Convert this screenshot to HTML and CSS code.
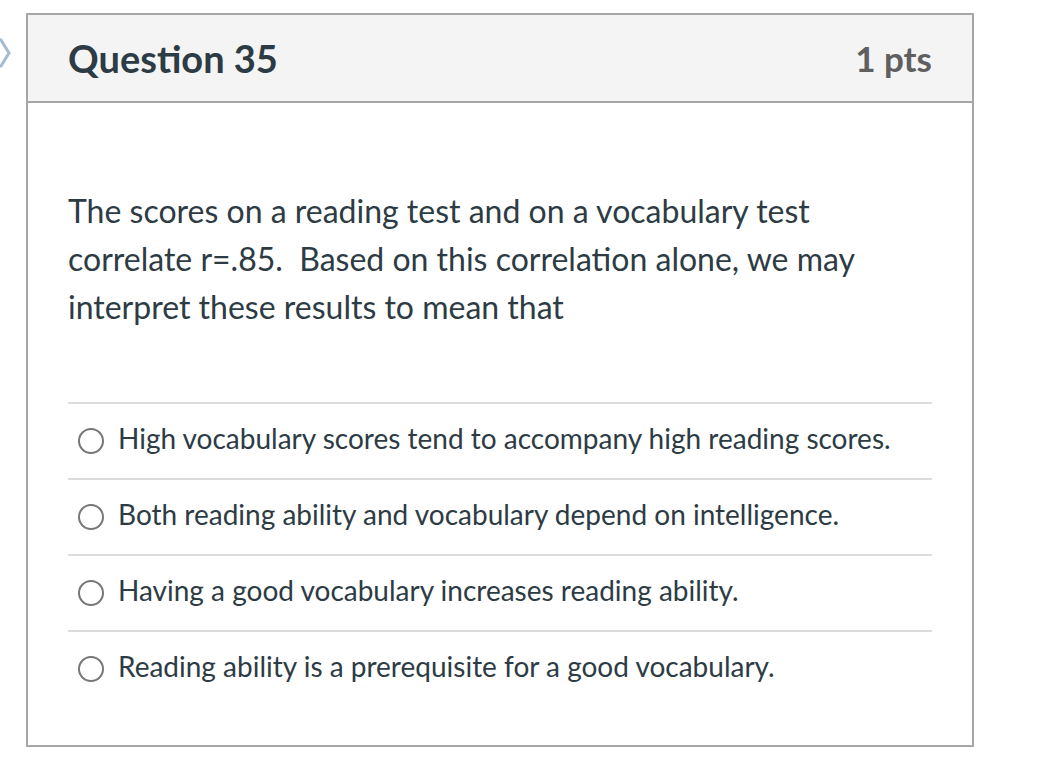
FILE: index.html
```html
<!DOCTYPE html>
<html>
<head>
<meta charset="utf-8">
<link rel="stylesheet" href="styles.css">
</head>
<body>
<svg class="flag" width="12" height="30" viewBox="0 0 12 30">
  <path d="M-6 2 L1 2 L9 15 L1 28 L-6 28" fill="none" stroke="#a3bcd2" stroke-width="3"/>
</svg>
<div class="card">
  <div class="header">
    <span class="title">Question 35</span>
    <span class="pts">1 pts</span>
  </div>
  <div class="content">
    <p class="question">The scores on a reading test and on a vocabulary test correlate r=.85.&nbsp; Based on this correlation alone, we may interpret these results to mean that</p>
    <div class="answers">
      <label class="answer"><span class="radio"></span><span class="text">High vocabulary scores tend to accompany high reading scores.</span></label>
      <label class="answer"><span class="radio"></span><span class="text">Both reading ability and vocabulary depend on intelligence.</span></label>
      <label class="answer"><span class="radio"></span><span class="text">Having a good vocabulary increases reading ability.</span></label>
      <label class="answer"><span class="radio"></span><span class="text">Reading ability is a prerequisite for a good vocabulary.</span></label>
    </div>
  </div>
</div>
</body>
</html>
```
FILE: styles.css
```css
html, body {
  margin: 0;
  padding: 0;
  background: #fff;
}
body {
  font-family: Lato, "Open Sans", sans-serif;
  color: #2d3b45;
  padding: 13px 0 0 26px;
  position: relative;
}
.flag {
  position: absolute;
  left: 0;
  top: 38px;
}
.card {
  width: 944px;
  border: 2px solid #a6a6a6;
}
.header {
  height: 86px;
  background: #f4f4f4;
  border-bottom: 2px solid #a6a6a6;
  display: flex;
  align-items: center;
  justify-content: space-between;
  padding: 0 40px;
}
.title {
  font-size: 38px;
  font-weight: 700;
  color: #2d3b45;
}
.pts {
  font-size: 35px;
  font-weight: 700;
  color: #5f5f5f;
}
.content {
  padding: 84px 40px 39px;
}
.question {
  margin: 0 0 71px;
  font-size: 32px;
  line-height: 48px;
  width: 800px;
}
.answer {
  display: flex;
  align-items: center;
  height: 74px;
  border-top: 2px solid #dcdcdc;
  font-size: 28px;
}
.text {
  padding-bottom: 7px;
}
.radio {
  width: 22px;
  height: 22px;
  border: 2px solid #777;
  border-radius: 50%;
  margin: 0 14px 0 10px;
  flex: none;
}
```
